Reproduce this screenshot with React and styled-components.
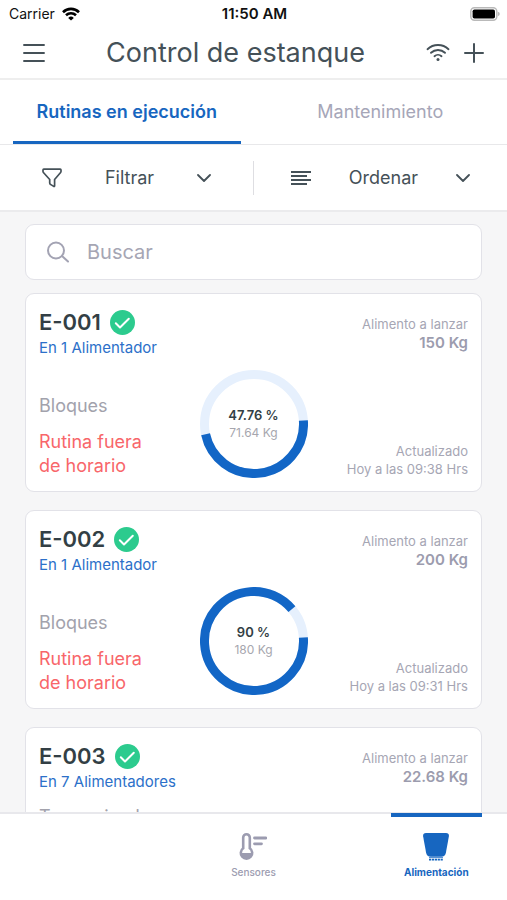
import { useState } from "react";
import styled, { createGlobalStyle } from "styled-components";

const GlobalStyle = createGlobalStyle`
    * {
        box-sizing: border-box;
    }

    body {
        margin: 0;
        background-color: #ffffff;
        color: #37474f;
        font-family: Inter, "Liberation Sans", sans-serif;
    }

    button, input {
        font-family: inherit;
        color: inherit;
    }

    svg {
        display: block;
        flex: none;
    }
`;

const Screen = styled.div`
    display: flex;
    flex-direction: column;
    height: 100vh;
    overflow: hidden;
`;

const StatusBar = styled.div`
    display: grid;
    grid-template-columns: 1fr auto 1fr;
    align-items: center;
    height: 27px;
    padding: 0 7px 0 9px;
    font-size: 14px;
    color: #111111;
`;

const Carrier = styled.div`
    display: flex;
    align-items: center;
    gap: 7px;
`;

const Clock = styled.div`
    font-size: 15px;
    font-weight: 600;
`;

const Battery = styled.div`
    justify-self: end;
`;

const Header = styled.header`
    display: flex;
    justify-content: space-between;
    align-items: center;
    height: 53px;
    padding: 0 23px;
    border-bottom: 2px solid #eeeeee;
`;

const Title = styled.h1`
    margin: 0;
    font-size: 27px;
    font-weight: 400;
    line-height: 32px;
    color: #455158;
`;

const IconButton = styled.button`
    display: block;
    padding: 0;
    border: 0;
    background: none;
`;

const Actions = styled.div`
    display: flex;
    align-items: center;
    gap: 14px;
`;

const Tabs = styled.div`
    display: flex;
    height: 65px;
    border-bottom: 1px solid #e8e8ea;
`;

const Tab = styled.button`
    flex: 1;
    margin: 0 13px;
    padding: 2px 0 0;
    border: 0;
    border-bottom: 3px solid ${({ $active }) => ($active ? "#1766c0" : "transparent")};
    background: none;
    font-size: 18px;
    font-weight: ${({ $active }) => ($active ? 600 : 400)};
    color: ${({ $active }) => ($active ? "#1766c0" : "#a6a6b8")};
`;

const Toolbar = styled.div`
    display: flex;
    align-items: center;
    height: 67px;
    border-bottom: 2px solid #ebebed;
`;

const ToolbarButton = styled.button`
    flex: 1;
    display: flex;
    justify-content: space-evenly;
    align-items: center;
    height: 34px;
    padding: 0;
    border: 0;
    background: none;
    font-size: 18px;
    color: #455158;

    & + & {
        border-left: 1px solid #dedee2;
    }
`;

const Content = styled.main`
    flex: 1;
    min-height: 0;
    overflow-y: auto;
    scrollbar-width: none;
    padding: 12px 25px 0;
    background-color: #f6f6f7;
`;

const SearchBox = styled.label`
    display: flex;
    align-items: center;
    gap: 18px;
    height: 56px;
    margin-bottom: 13px;
    padding: 0 20px;
    border: 1px solid #e2e2e8;
    border-radius: 9px;
    background-color: #ffffff;
`;

const SearchInput = styled.input`
    flex: 1;
    min-width: 0;
    padding: 0;
    border: 0;
    outline: 0;
    background: none;
    font-size: 20px;

    &::placeholder {
        color: #a6a6b4;
        opacity: 1;
    }
`;

const Card = styled.article`
    display: flex;
    min-height: 199px;
    margin-bottom: 18px;
    padding: 13px;
    border: 1px solid #e2e2e8;
    border-radius: 9px;
    background-color: #ffffff;
`;

const CardColumn = styled.div`
    flex: 1 1 0;
    display: flex;
    flex-direction: column;
    justify-content: space-between;
    text-align: ${({ $align }) => $align || "left"};
`;

const PondName = styled.h2`
    display: flex;
    align-items: center;
    gap: 9px;
    margin: 0;
    font-size: 22px;
    font-weight: 600;
    line-height: 30px;
    color: #333f45;
`;

const Feeders = styled.p`
    margin: 0;
    font-size: 15px;
    line-height: 22px;
    white-space: nowrap;
    color: #2c70c9;
`;

const Detail = styled.p`
    margin: 12px 0;
    font-size: 18px;
    line-height: 24px;
    color: #a2a2ac;
`;

const Warning = styled.p`
    max-width: 120px;
    margin: 0;
    font-size: 18px;
    line-height: 24px;
    color: #f8666a;
`;

const Meta = styled.p`
    margin: 0;
    font-size: 13px;
    line-height: 18px;
    color: #a6a6b4;
`;

const Amount = styled.p`
    margin: 0;
    font-size: 15px;
    font-weight: 600;
    line-height: 20px;
    color: #9c9cae;
`;

const TopMeta = styled.div`
    padding-top: 8px;
`;

const Gauge = styled.div`
    display: grid;
    align-self: end;
    place-items: center;

    & > * {
        grid-area: 1 / 1;
    }
`;

const GaugeText = styled.div`
    font-size: 12px;
    line-height: 18px;
    text-align: center;
    color: #a6a6ae;
`;

const Percent = styled.div`
    font-size: 13px;
    font-weight: 600;
    color: #333f45;
`;

const BottomNav = styled.nav`
    display: grid;
    grid-template-columns: repeat(5, 1fr);
    flex: none;
    height: 88px;
    padding: 0 25px;
    border-top: 2px solid #e8e8ec;
`;

const NavLink = styled.a`
    display: flex;
    flex-direction: column;
    align-items: center;
    grid-column: ${({ $column }) => $column};
    margin-top: -1px;
    padding-top: 16px;
    border-top: 4px solid ${({ $active }) => ($active ? "#1766c0" : "transparent")};
    font-size: 10px;
    font-weight: ${({ $active }) => ($active ? 700 : 500)};
    line-height: 16px;
    text-decoration: none;
    color: ${({ $active }) => ($active ? "#1766c0" : "#9c9cb0")};
`;

const NavIcon = styled.span`
    height: 31px;
`;

const ponds = [
    {
        name: "E-001",
        feeders: "En 1 Alimentador",
        amount: "150 Kg",
        percent: 47.76,
        given: "71.64 Kg",
        warning: "Rutina fuera de horario",
        updated: "Hoy a las 09:38 Hrs",
    },
    {
        name: "E-002",
        feeders: "En 1 Alimentador",
        amount: "200 Kg",
        percent: 90,
        given: "180 Kg",
        warning: "Rutina fuera de horario",
        updated: "Hoy a las 09:31 Hrs",
    },
    {
        name: "E-003",
        feeders: "En 7 Alimentadores",
        amount: "22.68 Kg",
        mode: "Temporizado",
    },
];

const StatusWifi = () => (
    <svg width="18" height="14" viewBox="0 0 18 14" fill="none" stroke="#000" strokeWidth="2.6">
        <path d="M1 5.2a11.4 11.4 0 0 1 16 0" />
        <path d="M4 8.3a7.2 7.2 0 0 1 10 0" />
        <path d="M9 13.6 6.2 10.9a4 4 0 0 1 5.6 0z" fill="#000" stroke="none" />
    </svg>
);

const BatteryIcon = () => (
    <svg width="30" height="14" viewBox="0 0 30 14">
        <rect x="0.8" y="0.8" width="26" height="12.4" rx="3.6" fill="#fff" stroke="#b9b9b9" strokeWidth="1.4" />
        <rect x="2.6" y="2.4" width="22.4" height="9.2" rx="1.8" fill="#000" />
        <path d="M27.8 4.8q2 .6 2 2.2t-2 2.2z" fill="#b9b9b9" />
    </svg>
);

const MenuIcon = () => (
    <svg width="22" height="20" viewBox="0 0 22 20" stroke="#455158" strokeWidth="1.9" strokeLinecap="round">
        <path d="M1 2h20M1 10h20M1 18h20" />
    </svg>
);

const WifiIcon = () => (
    <svg width="24" height="20" viewBox="0 0 24 20" fill="none" stroke="#455158" strokeWidth="1.9" strokeLinecap="round">
        <path d="M1.500 6.200a15.400 15.400 0 0 1 21 0" />
        <path d="M5 9.800a10.200 10.200 0 0 1 14 0" />
        <path d="M8.500 13.200a5.200 5.200 0 0 1 7 0" />
        <circle cx="12" cy="16.400" r="1.500" fill="#455158" stroke="none" />
    </svg>
);

const PlusIcon = () => (
    <svg width="20" height="20" viewBox="0 0 20 20" stroke="#455158" strokeWidth="2" strokeLinecap="round">
        <path d="M10 1v18M1 10h18" />
    </svg>
);

const FilterIcon = () => (
    <svg width="20" height="20" viewBox="0 0 20 20" fill="none" stroke="#455158" strokeWidth="1.7" strokeLinejoin="round">
        <path d="M1.800 1.200h16.400q.8 0 .8.800v1.500q0 .6-.4 1L12.600 11.500v6.300q0 1-.9.600l-3.200-2q-.8-.4-.8-1.300v-3.600L1.400 4.500Q1 4.100 1 3.500V2q0-.8.8-.8z" />
    </svg>
);

const SortIcon = () => (
    <svg width="20" height="16" viewBox="0 0 20 16" stroke="#455158" strokeWidth="2">
        <path d="M0 2h20M0 6h16M0 10h20M0 14h16" />
    </svg>
);

const Chevron = () => (
    <svg width="14" height="8" viewBox="0 0 14 8" fill="none" stroke="#455158" strokeWidth="1.8" strokeLinecap="round" strokeLinejoin="round">
        <path d="M1 1l6 6 6-6" />
    </svg>
);

const SearchIcon = () => (
    <svg width="23" height="22" viewBox="0 0 23 22" fill="none" stroke="#a3a3b3" strokeWidth="2" strokeLinecap="round">
        <circle cx="10" cy="9.500" r="8" />
        <path d="M16 15l6 5.500" />
    </svg>
);

const CheckBadge = () => (
    <svg width="25" height="25" viewBox="0 0 25 25" fill="none">
        <circle cx="12.500" cy="12.500" r="12.500" fill="#2ccb8e" />
        <path d="M5.800 13.300l4.200 4.200 8.800-8.800" stroke="#fff" strokeWidth="2" strokeLinecap="round" strokeLinejoin="round" />
    </svg>
);

const SensorIcon = () => (
    <svg width="28" height="28" viewBox="0 0 28 28">
        <path
            d="M4.200 4.600a3.300 3.300 0 0 1 6.600 0v10.700a5.700 5.700 0 1 1-6.600 0z"
            fill="none"
            stroke="#9c9cb0"
            strokeWidth="2.600"
        />
        <path d="M2 20h11a5.500 5.500 0 0 1-11 0z" fill="#9c9cb0" />
        <path d="M15.500 5h11.500M15.500 10.800h7" stroke="#9c9cb0" strokeWidth="2.800" strokeLinecap="round" />
    </svg>
);

const FeederIcon = () => (
    <svg width="26" height="28" viewBox="0 0 26 28" fill="#1766c0">
        <path d="M3 0h20q3.300 0 2.900 3.300l-3 16.500q-.8 4-4.600 4H7.700q-3.800 0-4.600-4L.1 3.300Q-.3 0 3 0z" />
        <path d="M6 24.600h14" stroke="#1766c0" strokeWidth="0.800" />
        <path d="M6 26.600h14" stroke="#1766c0" strokeWidth="1.800" strokeDasharray="2.200 0.700" />
    </svg>
);

// the arc starts a little above three o'clock and runs clockwise
const Ring = ({ percent }) => (
    <svg width="108" height="108" viewBox="0 0 108 108" fill="none" strokeWidth="9">
        <circle cx="54" cy="54" r="49.500" stroke="#e6f0fd" />
        <circle
            cx="54"
            cy="54"
            r="49.500"
            stroke="#1266c6"
            pathLength="100"
            strokeDasharray={`${percent} 100`}
            transform="rotate(-4 54 54)"
        />
    </svg>
);

function PondCard({ pond }) {
    const { name, feeders, amount, mode, percent, given, warning, updated } = pond;
    return (
        <Card>
            <CardColumn>
                <div>
                    <PondName>{name}<CheckBadge /></PondName>
                    <Feeders>{feeders}</Feeders>
                    {mode && <Detail>{mode}</Detail>}
                </div>
                {warning && (
                    <div>
                        <Detail>Bloques</Detail>
                        <Warning>{warning}</Warning>
                    </div>
                )}
            </CardColumn>
            {given && (
                <Gauge>
                    <Ring percent={percent} />
                    <GaugeText>
                        <Percent>{percent} %</Percent>
                        {given}
                    </GaugeText>
                </Gauge>
            )}
            <CardColumn $align="right">
                <TopMeta>
                    <Meta>Alimento a lanzar</Meta>
                    <Amount>{amount}</Amount>
                </TopMeta>
                {updated && (
                    <div>
                        <Meta>Actualizado</Meta>
                        <Meta>{updated}</Meta>
                    </div>
                )}
            </CardColumn>
        </Card>
    );
}

export default function App() {
    const [tab, setTab] = useState("Rutinas en ejecución");
    const [search, setSearch] = useState("");

    return (
        <>
            <GlobalStyle />
            <Screen>
                <StatusBar>
                    <Carrier>Carrier <StatusWifi /></Carrier>
                    <Clock>11:50 AM</Clock>
                    <Battery><BatteryIcon /></Battery>
                </StatusBar>
                <Header>
                    <IconButton aria-label="Menú"><MenuIcon /></IconButton>
                    <Title>Control de estanque</Title>
                    <Actions>
                        <WifiIcon />
                        <IconButton aria-label="Agregar"><PlusIcon /></IconButton>
                    </Actions>
                </Header>
                <Tabs role="tablist">
                    {["Rutinas en ejecución", "Mantenimiento"].map((label) => (
                        <Tab
                            key={label}
                            role="tab"
                            aria-selected={tab === label}
                            $active={tab === label}
                            onClick={() => setTab(label)}
                        >
                            {label}
                        </Tab>
                    ))}
                </Tabs>
                <Toolbar>
                    <ToolbarButton><FilterIcon /><span>Filtrar</span><Chevron /></ToolbarButton>
                    <ToolbarButton><SortIcon /><span>Ordenar</span><Chevron /></ToolbarButton>
                </Toolbar>
                <Content>
                    <SearchBox>
                        <SearchIcon />
                        <SearchInput
                            aria-label="Buscar"
                            placeholder="Buscar"
                            value={search}
                            onChange={(e) => setSearch(e.target.value)}
                        />
                    </SearchBox>
                    {ponds
                        .filter((pond) => pond.name.toLowerCase().includes(search.toLowerCase()))
                        .map((pond) => <PondCard key={pond.name} pond={pond} />)}
                </Content>
                <BottomNav>
                    <NavLink href="#sensores" $column={3}>
                        <NavIcon><SensorIcon /></NavIcon>
                        Sensores
                    </NavLink>
                    <NavLink href="#alimentacion" $column={5} $active aria-current="page">
                        <NavIcon><FeederIcon /></NavIcon>
                        Alimentación
                    </NavLink>
                </BottomNav>
            </Screen>
        </>
    );
}
